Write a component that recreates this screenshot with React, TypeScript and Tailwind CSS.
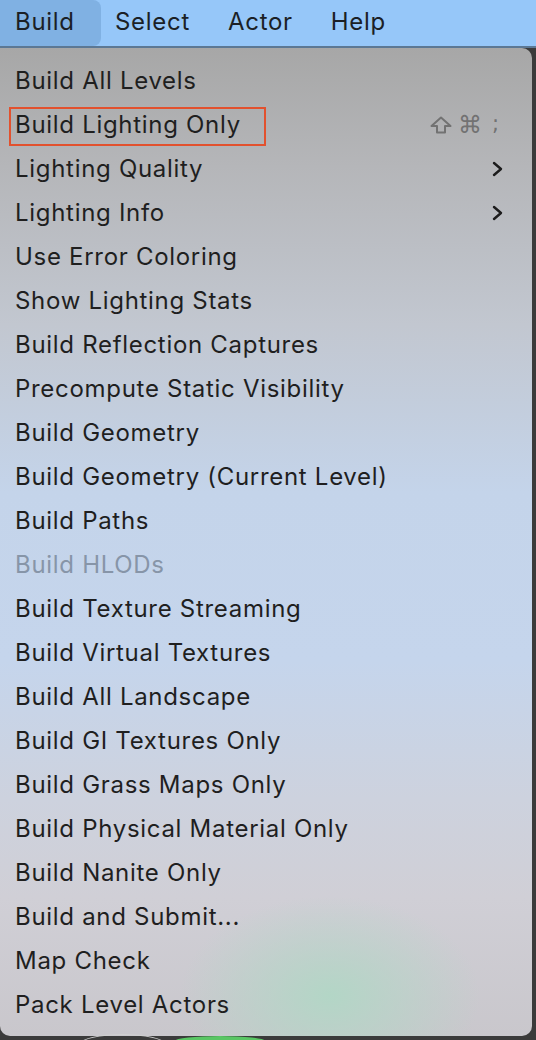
import React from 'react';

type Item = { label: string; shortcut?: boolean; submenu?: boolean; disabled?: boolean; boxed?: boolean };

const items: Item[] = [
  { label: 'Build All Levels' },
  { label: 'Build Lighting Only', shortcut: true, boxed: true },
  { label: 'Lighting Quality', submenu: true },
  { label: 'Lighting Info', submenu: true },
  { label: 'Use Error Coloring' },
  { label: 'Show Lighting Stats' },
  { label: 'Build Reflection Captures' },
  { label: 'Precompute Static Visibility' },
  { label: 'Build Geometry' },
  { label: 'Build Geometry (Current Level)' },
  { label: 'Build Paths' },
  { label: 'Build HLODs', disabled: true },
  { label: 'Build Texture Streaming' },
  { label: 'Build Virtual Textures' },
  { label: 'Build All Landscape' },
  { label: 'Build GI Textures Only' },
  { label: 'Build Grass Maps Only' },
  { label: 'Build Physical Material Only' },
  { label: 'Build Nanite Only' },
  { label: 'Build and Submit...' },
  { label: 'Map Check' },
  { label: 'Pack Level Actors' },
];

function Chevron() {
  return (
    <svg width="12" height="16" viewBox="0 0 12 16" className="text-[#1c1c1c]">
      <polyline points="2,2 9,8 2,14" fill="none" stroke="currentColor" strokeWidth="2.4" strokeLinecap="round" strokeLinejoin="round" />
    </svg>
  );
}

function ShiftGlyph() {
  return (
    <svg width="22" height="18" viewBox="0 0 22 18" className="text-[#727272]">
      <path
        d="M11 1.5 L20.5 10 L15 10 L15 16.5 L7 16.5 L7 10 L1.5 10 Z"
        fill="none"
        stroke="currentColor"
        strokeWidth="2"
        strokeLinejoin="round"
      />
    </svg>
  );
}

export default function App() {
  return (
    <div className="relative w-[536px] h-[1040px] overflow-hidden bg-[#3b3b3b] font-['Inter','Liberation_Sans',sans-serif] tracking-[0.7px]">
      {/* menu bar */}
      <div className="flex h-[48px] items-stretch border-b-2 border-[#5c7894] bg-[#96c7f9] text-[24px] text-[#1b1f26]">
        <div className="flex w-[101px] items-center rounded-r-[8px] bg-[#80b1e3] pl-[15px] pb-[2px]">Build</div>
        <div className="ml-[14px] flex items-center gap-[38px] pb-[2px]">
          <span>Select</span>
          <span>Actor</span>
          <span>Help</span>
        </div>
      </div>

      {/* dropdown */}
      <div className="relative w-[532px] overflow-hidden rounded-tr-[10px] rounded-b-[10px] bg-[linear-gradient(180deg,#a7a7a7_0%,#b5b6b9_12%,#c2c7d0_28%,#c4d4ea_45%,#c5d5ec_62%,#cdd2de_76%,#d0cfd6_86%,#c9c7cc_100%)] pt-[11px] pb-[9px]">
        <div className="pointer-events-none absolute bottom-[-60px] left-[180px] h-[200px] w-[300px] rounded-full bg-[radial-gradient(closest-side,#b3d6c6,rgba(190,214,204,0))]" />
        {items.map((it) => (
          <div key={it.label} className="relative flex h-[44px] items-center pl-[15px] pr-[28px] text-[24px]">
            {it.boxed && (
              <div className="absolute left-[9px] top-[4px] h-[39px] w-[257px] border-2 border-[#e2512e]" />
            )}
            <span className={it.disabled ? 'text-[#8795a8]' : 'text-[#1f1f1f]'}>{it.label}</span>
            <div className="ml-auto flex items-center">
              {it.shortcut && (
                <span className="mr-[5px] flex items-center text-[#727272] tracking-normal">
                  <ShiftGlyph />
                  <span className="ml-[6px] font-['DejaVu_Sans',sans-serif] text-[24px] leading-none">⌘</span>
                  <span className="ml-[10px] font-['DejaVu_Sans',sans-serif] text-[21px]">;</span>
                </span>
              )}
              {it.submenu && <Chevron />}
            </div>
          </div>
        ))}
      </div>

      {/* background bits below the menu */}
      <div className="absolute bottom-[-6px] left-[175px] h-[10px] w-[90px] rounded-[50%] bg-[#59c664]" />
      <div className="absolute bottom-[-14px] left-[80px] h-[20px] w-[85px] rounded-[50%] border border-[#d0d0d0]" />
    </div>
  );
}
